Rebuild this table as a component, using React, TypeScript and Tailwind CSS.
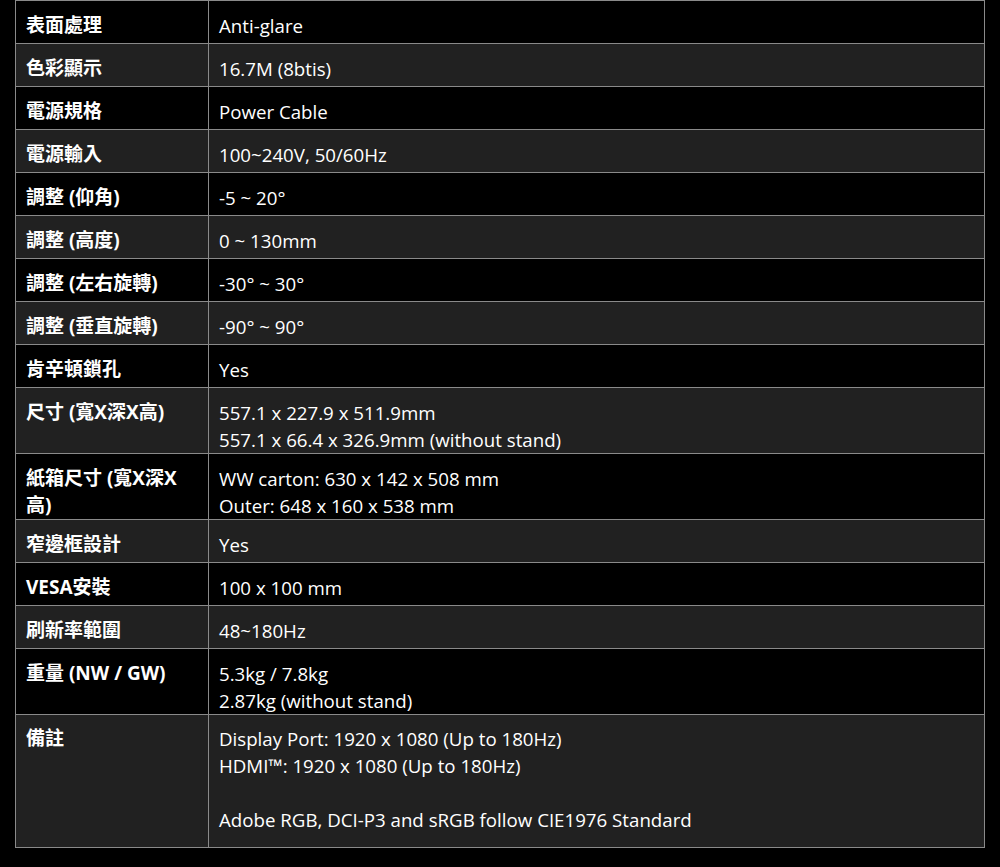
const ROWS: { label: string; lines: string[]; gray: boolean }[] = [
  { label: "表面處理", lines: ["Anti-glare"], gray: false },
  { label: "色彩顯示", lines: ["16.7M (8btis)"], gray: true },
  { label: "電源規格", lines: ["Power Cable"], gray: false },
  { label: "電源輸入", lines: ["100~240V, 50/60Hz"], gray: true },
  { label: "調整 (仰角)", lines: ["-5 ~ 20°"], gray: false },
  { label: "調整 (高度)", lines: ["0 ~ 130mm"], gray: true },
  { label: "調整 (左右旋轉)", lines: ["-30° ~ 30°"], gray: false },
  { label: "調整 (垂直旋轉)", lines: ["-90° ~ 90°"], gray: true },
  { label: "肯辛頓鎖孔", lines: ["Yes"], gray: false },
  { label: "尺寸 (寬X深X高)", lines: ["557.1 x 227.9 x 511.9mm", "557.1 x 66.4 x 326.9mm (without stand)"], gray: true },
  { label: "紙箱尺寸 (寬X深X高)", lines: ["WW carton: 630 x 142 x 508 mm", "Outer: 648 x 160 x 538 mm"], gray: false },
  { label: "窄邊框設計", lines: ["Yes"], gray: true },
  { label: "VESA安裝", lines: ["100 x 100 mm"], gray: false },
  { label: "刷新率範圍", lines: ["48~180Hz"], gray: true },
  { label: "重量 (NW / GW)", lines: ["5.3kg / 7.8kg", "2.87kg (without stand)"], gray: false },
];

const FONT = { fontFamily: '"Open Sans", "Noto Sans CJK TC", sans-serif' };

export default function App() {
  return (
    <div className="bg-black min-h-[867px] w-[1000px] text-white" style={FONT}>
      <table className="ml-[15px] w-[970px] border-collapse table-fixed text-[18.7px] leading-[27px]">
        <colgroup>
          <col className="w-[193px]" />
          <col />
        </colgroup>
        <tbody>
          {ROWS.map(r => (
            <tr key={r.label} className={`h-[43px] ${r.gray ? "bg-[#212121]" : "bg-black"}`}>
              <td className="border border-[#8a8a8a] align-top px-[10px] pt-[11px] pb-0 font-bold text-[19px]">{r.label}</td>
              <td className="border border-[#8a8a8a] align-top px-[10px] pt-[11px] pb-0">
                {r.lines.map(l => <div key={l}>{l}</div>)}
              </td>
            </tr>
          ))}
          {/* remarks */}
          <tr className="bg-[#212121]">
            <td className="border border-[#8a8a8a] align-top px-[10px] pt-[10px] pb-[14px] font-bold text-[19px]">備註</td>
            <td className="border border-[#8a8a8a] align-top px-[10px] pt-[10px] pb-[14px]">
              <div>Display Port: 1920 x 1080 (Up to 180Hz)</div>
              <div>HDMI™: 1920 x 1080 (Up to 180Hz)</div>
              <div>&nbsp;</div>
              <div>Adobe RGB, DCI-P3 and sRGB follow CIE1976 Standard</div>
            </td>
          </tr>
        </tbody>
      </table>
    </div>
  );
}
